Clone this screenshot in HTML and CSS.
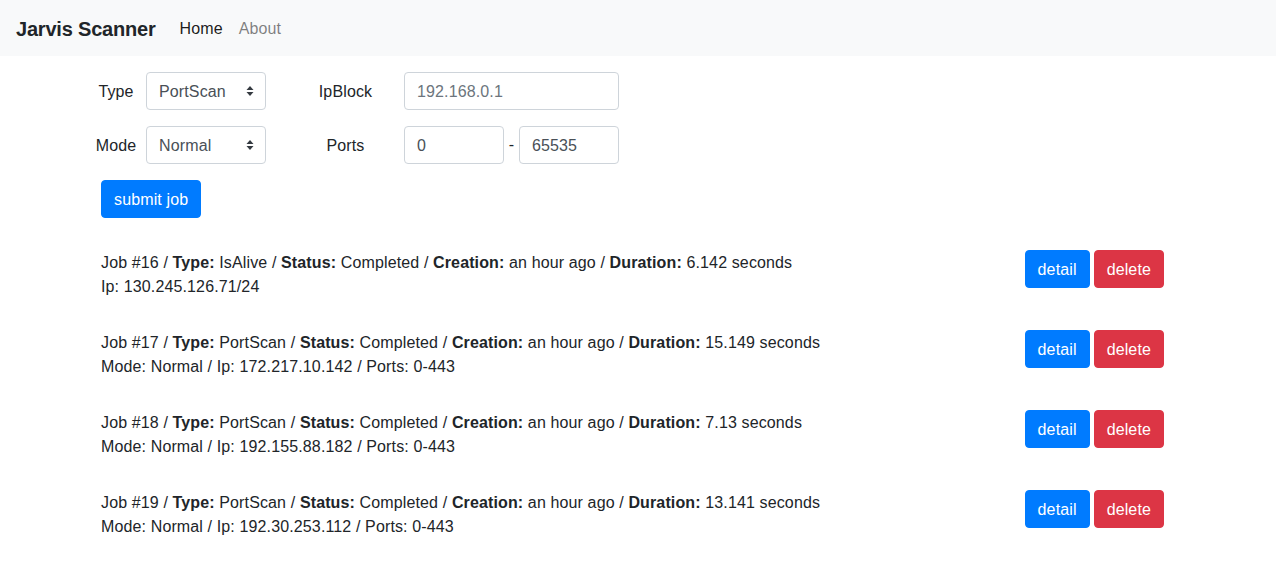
FILE: index.html
```html
<!DOCTYPE html>
<html>
<head>
<meta charset="utf-8">
<title>Jarvis Scanner</title>
<link rel="stylesheet" href="styles.css">
</head>
<body>
<nav class="navbar">
  <span class="brand">Jarvis Scanner</span>
  <a class="nav-link active">Home</a>
  <a class="nav-link">About</a>
</nav>
<main class="main">
  <form class="job-form">
    <div class="form-row">
      <label class="lbl lbl-a">Type</label>
      <div class="select-wrap">
        <select class="select"><option>PortScan</option></select>
        <svg class="caret" width="8" height="12" viewBox="0 0 8 12"><path d="M4 1 L7.5 5 H0.5 Z M4 11 L7.5 7 H0.5 Z" fill="#343a40"/></svg>
      </div>
      <label class="lbl lbl-b">IpBlock</label>
      <input class="input input-wide" placeholder="192.168.0.1">
    </div>
    <div class="form-row">
      <label class="lbl lbl-a">Mode</label>
      <div class="select-wrap">
        <select class="select"><option>Normal</option></select>
        <svg class="caret" width="8" height="12" viewBox="0 0 8 12"><path d="M4 1 L7.5 5 H0.5 Z M4 11 L7.5 7 H0.5 Z" fill="#343a40"/></svg>
      </div>
      <label class="lbl lbl-b">Ports</label>
      <div class="ports">
        <input class="input input-port" value="0">
        <span class="dash">-</span>
        <input class="input input-port" value="65535">
      </div>
    </div>
    <div class="submit-row">
      <button type="button" class="btn btn-primary">submit job</button>
    </div>
  </form>

  <ul class="jobs">
    <li class="job">
      <div class="job-text">
        <div>Job #16 / <b>Type:</b> IsAlive / <b>Status:</b> Completed / <b>Creation:</b> an hour ago / <b>Duration:</b> 6.142 seconds</div>
        <div>Ip: 130.245.126.71/24</div>
      </div>
      <div class="job-actions">
        <button class="btn btn-primary">detail</button>
        <button class="btn btn-danger">delete</button>
      </div>
    </li>
    <li class="job">
      <div class="job-text">
        <div>Job #17 / <b>Type:</b> PortScan / <b>Status:</b> Completed / <b>Creation:</b> an hour ago / <b>Duration:</b> 15.149 seconds</div>
        <div>Mode: Normal / Ip: 172.217.10.142 / Ports: 0-443</div>
      </div>
      <div class="job-actions">
        <button class="btn btn-primary">detail</button>
        <button class="btn btn-danger">delete</button>
      </div>
    </li>
    <li class="job">
      <div class="job-text">
        <div>Job #18 / <b>Type:</b> PortScan / <b>Status:</b> Completed / <b>Creation:</b> an hour ago / <b>Duration:</b> 7.13 seconds</div>
        <div>Mode: Normal / Ip: 192.155.88.182 / Ports: 0-443</div>
      </div>
      <div class="job-actions">
        <button class="btn btn-primary">detail</button>
        <button class="btn btn-danger">delete</button>
      </div>
    </li>
    <li class="job">
      <div class="job-text">
        <div>Job #19 / <b>Type:</b> PortScan / <b>Status:</b> Completed / <b>Creation:</b> an hour ago / <b>Duration:</b> 13.141 seconds</div>
        <div>Mode: Normal / Ip: 192.30.253.112 / Ports: 0-443</div>
      </div>
      <div class="job-actions">
        <button class="btn btn-primary">detail</button>
        <button class="btn btn-danger">delete</button>
      </div>
    </li>
  </ul>
</main>
</body>
</html>
```

FILE: styles.css
```css
* { box-sizing: border-box; }
html, body {
  margin: 0;
  padding: 0;
  background: #fff;
  font-family: "Liberation Sans", Arial, sans-serif;
  font-size: 16px;
  line-height: 24px;
  letter-spacing: 0.13px;
  color: #212529;
}
.navbar {
  height: 56px;
  background: #f8f9fa;
  display: flex;
  align-items: center;
  padding: 1px 16px 0;
}
.brand {
  font-size: 20px;
  font-weight: 700;
  margin-right: 16px;
  line-height: 30px;
  letter-spacing: -0.2px;
}
.nav-link {
  padding: 8px;
  color: rgba(0, 0, 0, 0.5);
  text-decoration: none;
}
.nav-link.active { color: rgba(0, 0, 0, 0.9); }

.main { padding: 16px 112px 0 0; }

.job-form { display: flex; flex-direction: column; gap: 16px; }
.form-row {
  display: flex;
  align-items: center;
  height: 38px;
}
.lbl { text-align: center; padding-top: 1px; }
.lbl-a { width: 60px; margin-left: 86px; }
.lbl-b { width: 117px; margin-left: 21px; }
.select-wrap { position: relative; width: 120px; height: 38px; }
.select {
  appearance: none;
  -webkit-appearance: none;
  width: 100%;
  height: 38px;
  border: 1px solid #ced4da;
  border-radius: 4px;
  background: #fff;
  padding: 1px 12px 0;
  font-family: inherit;
  font-size: 16px;
  letter-spacing: 0.13px;
  color: #495057;
}
.caret { position: absolute; right: 12px; top: 13px; pointer-events: none; }
.input {
  height: 38px;
  border: 1px solid #ced4da;
  border-radius: 4px;
  padding: 1px 12px 0;
  font-family: inherit;
  font-size: 16px;
  letter-spacing: 0.13px;
  color: #495057;
  background: #fff;
}
.input::placeholder { color: #6c757d; }
.input-wide { width: 215px; }
.ports { display: flex; align-items: center; }
.input-port { width: 100px; }
.dash { width: 15px; text-align: center; }

.submit-row { padding-left: 101px; }
.btn {
  border: 1px solid transparent;
  border-radius: 4px;
  height: 38px;
  padding: 2px 12px 0;
  font-family: inherit;
  font-size: 16px;
  letter-spacing: 0.13px;
  color: #fff;
  line-height: 24px;
}
.btn-primary { background: #007bff; border-color: #007bff; }
.btn-danger { background: #dc3545; border-color: #dc3545; }

.jobs {
  list-style: none;
  margin: 32px 0 0 0;
  padding: 0 0 0 101px;
  display: flex;
  flex-direction: column;
  gap: 32px;
}
.job {
  display: flex;
  justify-content: space-between;
  align-items: flex-start;
  height: 48px;
}
.job-text { padding-top: 1px; }
.job-text b { font-weight: 700; }
.job-actions { display: flex; gap: 4px; }
```
